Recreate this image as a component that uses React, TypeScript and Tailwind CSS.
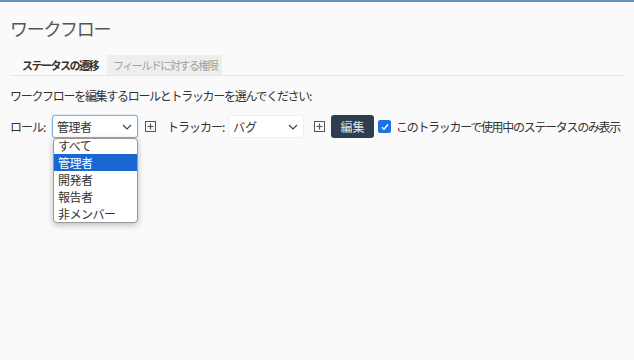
import React from "react";

const font = { fontFamily: '"Noto Sans CJK JP", "Noto Sans", sans-serif' };

function PlusBox() {
  return (
    <svg width="11" height="11" viewBox="0 0 11 11" className="shrink-0 block">
      <rect x="0.5" y="0.5" width="10" height="10" fill="none" stroke="#555" strokeWidth="1" />
      <path d="M5.5 2.5v6M2.5 5.5h6" stroke="#555" strokeWidth="1.2" />
    </svg>
  );
}

function Chevron() {
  return (
    <svg width="10" height="6" viewBox="0 0 10 6">
      <path d="M1 1l4 4 4-4" fill="none" stroke="#444" strokeWidth="1.2" />
    </svg>
  );
}

export default function App() {
  return (
    <div className="w-[634px] h-[360px] bg-[#fafafa] text-[#333] overflow-hidden whitespace-nowrap" style={font}>
      <div className="h-[2px] bg-[#6b8fbd]" />
      <div className="px-[10px]">
        <h2 className="text-[18px] leading-[26px] tracking-[-1.3px] text-[#555] mt-[13px] font-normal">ワークフロー</h2>
        <div className="flex items-end mt-[14px] border-b border-[#e8e8e8] pl-[4px] gap-[5px] h-[21px]">
          <div className="h-[20px] w-[88px] pl-[8px] text-[11px] tracking-[-1.5px] font-bold text-[#333] bg-[#fafafa] flex items-center">ステータスの遷移</div>
          <div className="h-[20px] w-[115px] pl-[6px] text-[11px] tracking-[-1.5px] text-[#a0a0a0] bg-[#eeeeee] flex items-center">フィールドに対する権限</div>
        </div>
        <p className="text-[12px] leading-[16px] tracking-[-1.3px] mt-[12px] text-[#333]">ワークフローを編集するロールとトラッカーを選んでください:</p>
        <div className="flex items-center mt-[11px] h-[23px] text-[12px]">
          <span className="w-[42px] tracking-[-1px]">ロール:</span>
          <div className="relative">
            <div className="w-[86px] h-[23px] border border-[#7fb0e0] rounded-[3px] bg-white flex items-center justify-between pl-[4px] pr-[5px] shadow-[0_0_2px_#9cc3ea]">
              <span className="text-[12px] tracking-[-0.5px]">管理者</span>
              <Chevron />
            </div>
            <div className="absolute left-[1px] top-[23px] w-[85px] bg-white border border-[#9a9a9a] rounded-[4px] shadow-[0_2px_6px_rgba(0,0,0,0.25)] text-[12px] tracking-[-0.5px] leading-[17px] overflow-hidden z-10">
              <div className="px-[4px] h-[15px] leading-[14px]">すべて</div>
              <div className="px-[4px] bg-[#1967d2] text-white">管理者</div>
              <div className="px-[4px]">開発者</div>
              <div className="px-[4px]">報告者</div>
              <div className="px-[4px]">非メンバー</div>
            </div>
          </div>
          <span className="ml-[7px]"><PlusBox /></span>
          <span className="ml-[11px] w-[61px] tracking-[-1px]">トラッカー:</span>
          <div className="w-[76px] h-[23px] border border-[#f0f0f0] rounded-[3px] bg-white flex items-center justify-between pl-[4px] pr-[5px]">
            <span>バグ</span>
            <Chevron />
          </div>
          <span className="ml-[10px]"><PlusBox /></span>
          <button className="ml-[6px] h-[23px] w-[43px] bg-[#2d3e50] text-[#dfe4ea] rounded-[3px] text-[12px]">編集</button>
          <span className="ml-[4px] w-[13px] h-[13px] rounded-[2px] bg-[#1a73e8] flex items-center justify-center">
            <svg width="10" height="10" viewBox="0 0 10 10"><path d="M2 5.2l2 2 4-4.6" fill="none" stroke="white" strokeWidth="1.6" /></svg>
          </span>
          <span className="ml-[5px] tracking-[-1.3px]">このトラッカーで使用中のステータスのみ表示</span>
        </div>
      </div>
    </div>
  );
}
